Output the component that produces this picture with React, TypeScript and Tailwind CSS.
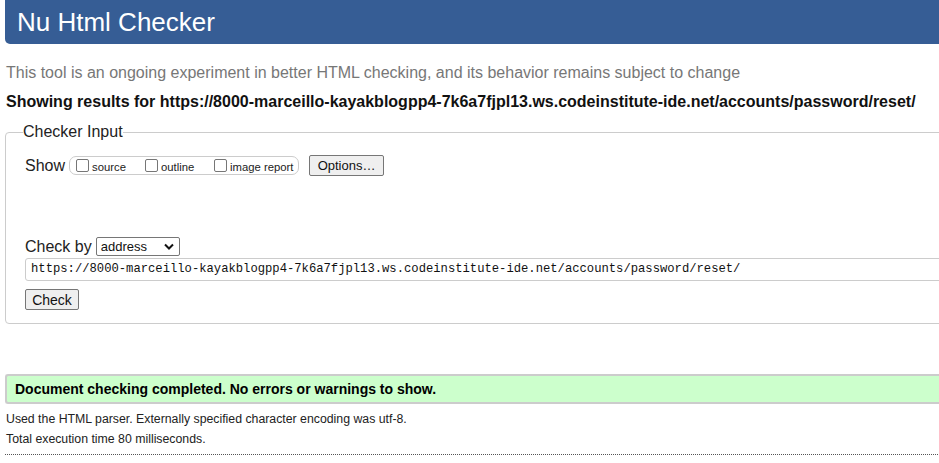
const URL = "https://8000-marceillo-kayakblogpp4-7k6a7fjpl13.ws.codeinstitute-ide.net/accounts/password/reset/";

function Checkbox({ label, width }: { label: string; width: string }) {
  return (
    <label className={`flex items-center gap-[3px] text-[11.3px] text-[#222] ${width}`}>
      <span className="inline-block h-[13px] w-[13px] shrink-0 rounded-[2px] border border-[#767676] bg-white" />
      <span className="mt-[3px]">{label}</span>
    </label>
  );
}

export default function App() {
  return (
    <div className="h-[463px] w-[939px] overflow-hidden bg-white font-['Liberation_Sans',Arial,sans-serif] text-[#222]">
      <div className="w-[1100px]">
        <header className="ml-[5px] flex h-[44px] items-center rounded-bl-[5px] bg-[#365d95] pl-[12px]">
          <h1 className="text-[26px] leading-none text-white">Nu Html Checker</h1>
        </header>

        <p className="ml-[6px] mt-[20px] text-[16px] leading-[18px] text-[#777]">
          This tool is an ongoing experiment in better HTML checking, and its behavior remains subject to change
        </p>
        <p className="ml-[6px] mt-[11px] text-[16px] font-bold leading-[18px] text-[#111]">
          Showing results for {URL}
        </p>

        <fieldset className="ml-[5px] mt-[12px] rounded-[4px] border border-[#ccc] px-[19px] pb-[13px] pt-[14px]">
          <legend className="ml-[-2px] px-0 text-[16px] leading-[18px] text-[#222]">Checker Input</legend>

          <div className="flex items-center">
            <span className="text-[16px] leading-[21px]">Show</span>
            <div className="ml-[4px] flex h-[19px] w-[230px] items-center rounded-[7px] border border-[#ccc] pl-[6px]">
              <Checkbox label="source" width="w-[69px]" />
              <Checkbox label="outline" width="w-[69px]" />
              <Checkbox label="image report" width="w-[84px]" />
            </div>
            <button className="ml-[10px] h-[21px] w-[75px] rounded-[2px] border border-[#767676] bg-[#efefef] text-[13px] text-[#111]">
              Options…
            </button>
          </div>

          <div className="mt-[61px] flex items-center">
            <span className="text-[16px] leading-[19px]">Check by</span>
            <div className="ml-[4px] flex h-[19px] w-[84px] items-center justify-between rounded-[2px] border border-[#767676] pl-[4px] pr-[5px] text-[13px] text-[#111]">
              <span>address</span>
              <svg width="10" height="7" viewBox="0 0 10 7">
                <path d="M1 1.5 L5 5.5 L9 1.5" fill="none" stroke="#111" strokeWidth="2" />
              </svg>
            </div>
          </div>

          <div className="mt-[2px] flex h-[23px] items-center rounded-[3px] border border-[#ccc] pl-[5px] font-['Liberation_Mono',monospace] text-[12.2px] text-[#111]">
            {URL}
          </div>

          <button className="mt-[8px] block h-[21px] w-[54px] rounded-[2px] border border-[#767676] bg-[#efefef] text-[14px] text-[#111]">
            Check
          </button>
        </fieldset>

        <div className="ml-[5px] mt-[50px] flex h-[30px] items-center rounded-[3px] border-y-2 border-l-2 border-[#ccc] bg-[#ccffcc] pl-[8px]">
          <span className="text-[14px] font-bold text-black">Document checking completed. No errors or warnings to show.</span>
        </div>

        <p className="ml-[6px] mt-[8px] text-[12.3px] leading-[14px] text-[#222]">
          Used the HTML parser. Externally specified character encoding was utf-8.
        </p>
        <p className="ml-[6px] mt-[6px] text-[12.3px] leading-[14px] text-[#222]">Total execution time 80 milliseconds.</p>

        <div className="ml-[5px] mt-[8px] border-t border-dotted border-[#555]" />
      </div>
    </div>
  );
}
